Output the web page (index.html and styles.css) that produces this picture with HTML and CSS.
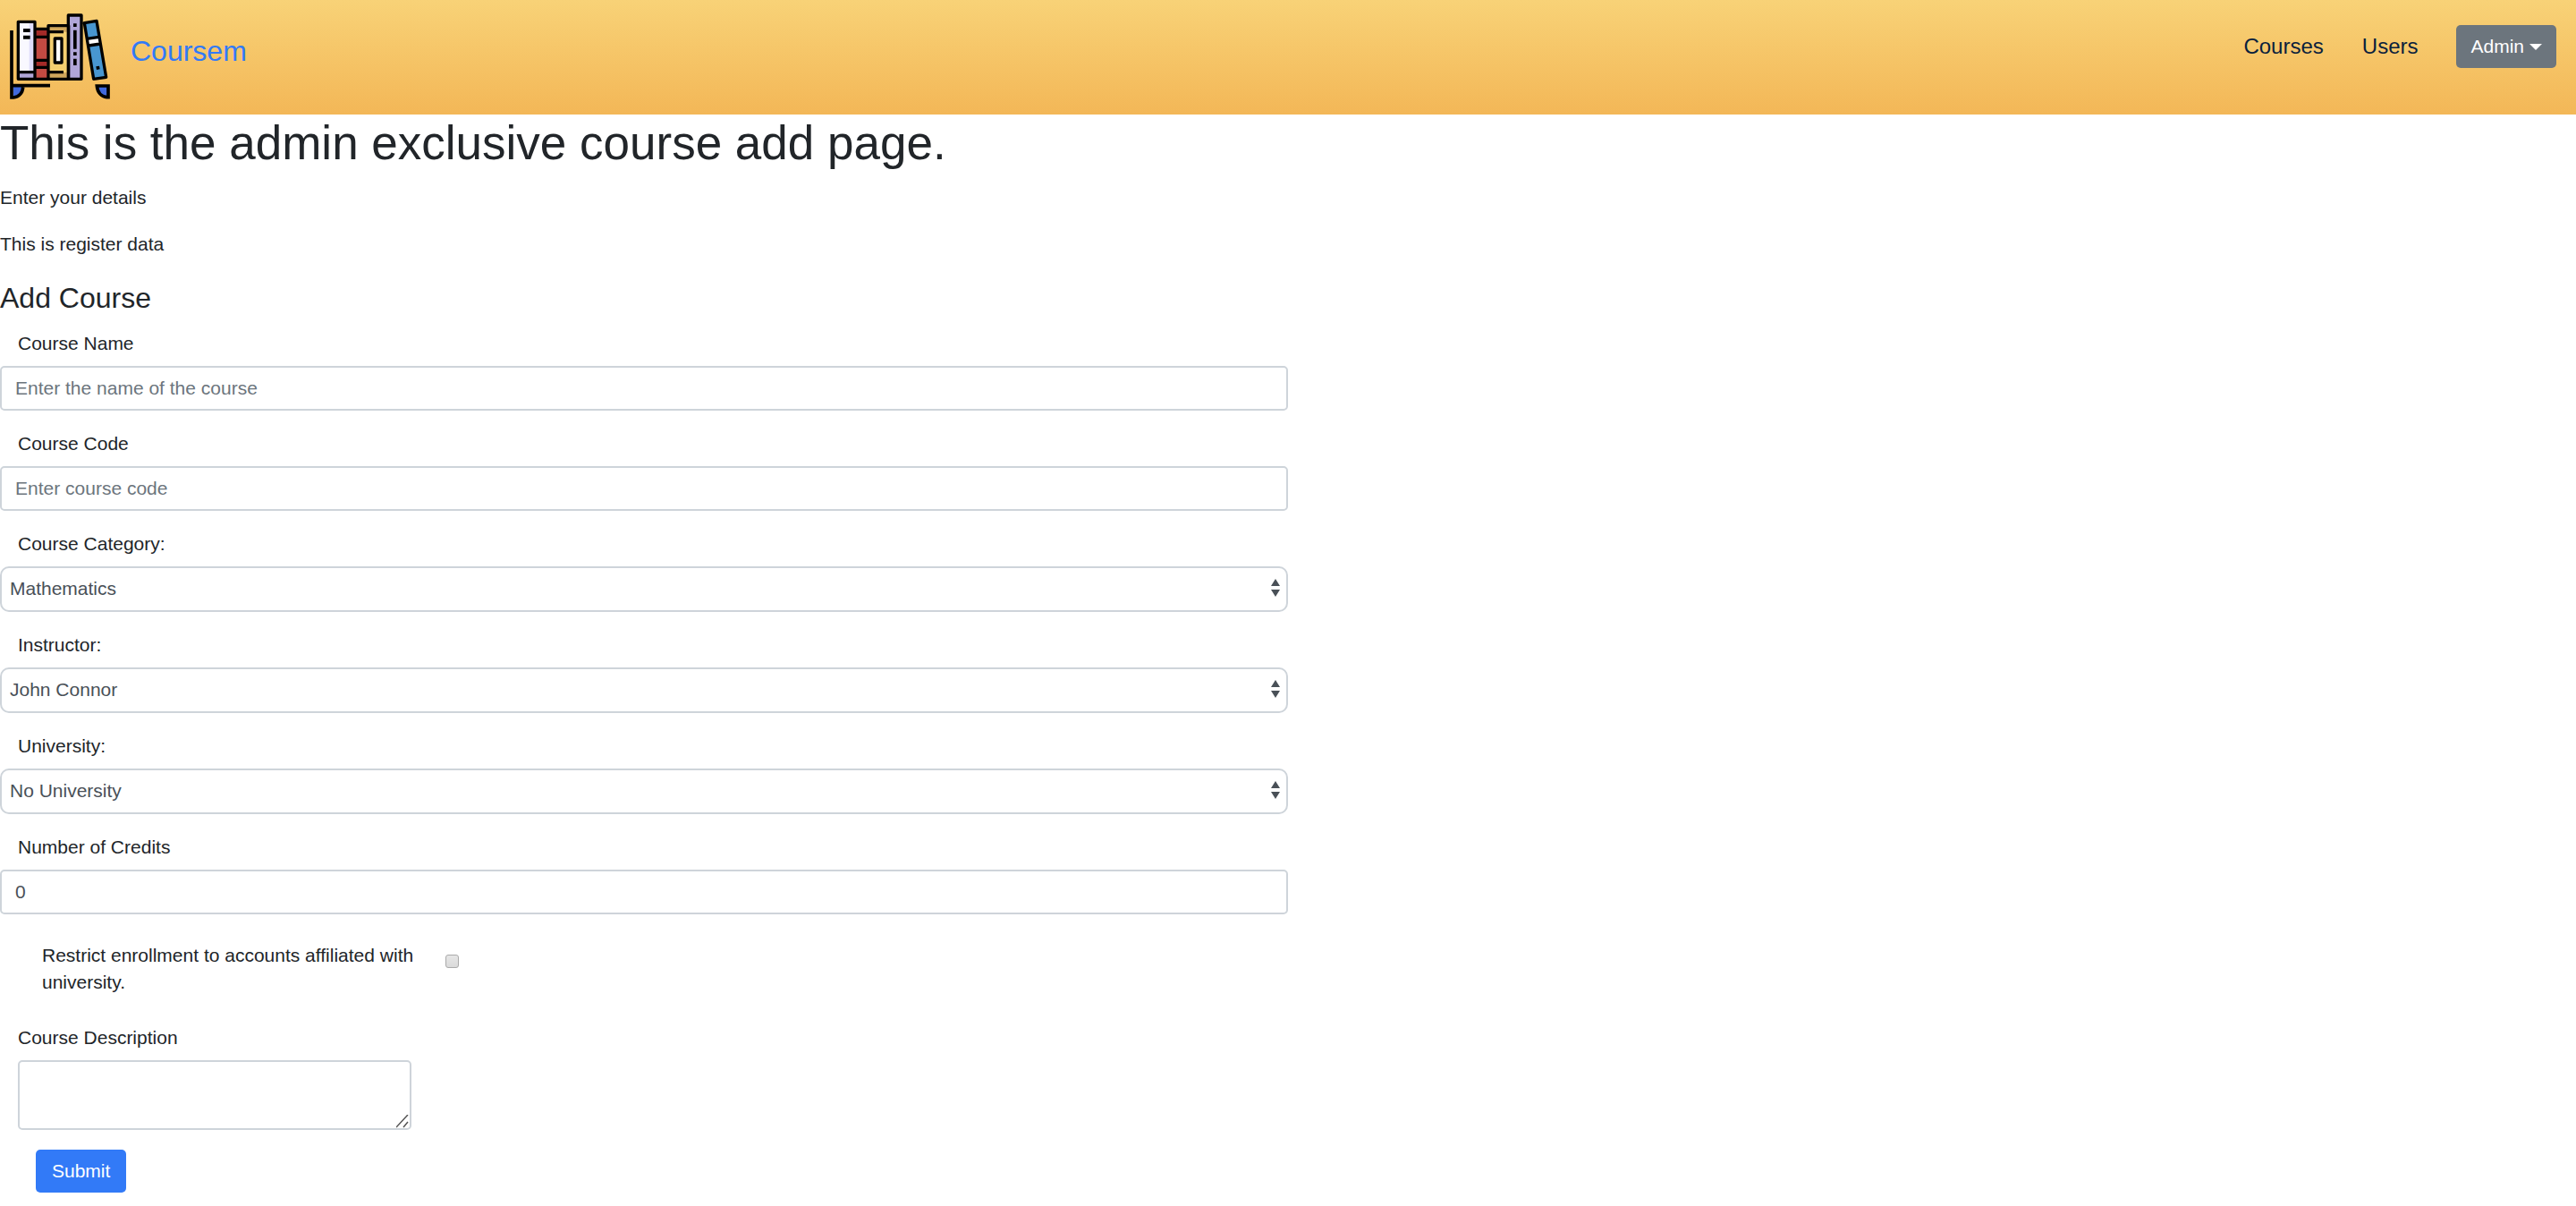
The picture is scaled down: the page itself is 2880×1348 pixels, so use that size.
FILE: index.html
```html
<!DOCTYPE html>
<html lang="en">
<head>
  <meta charset="utf-8">
  <meta name="viewport" content="width=device-width, initial-scale=1">
  <title>Coursem</title>
  <link rel="stylesheet" href="styles.css">
</head>
<body>
  <header class="navbar">
    <a class="brand" href="#">
      <svg class="brand-logo" viewBox="30 42 342 294" aria-hidden="true">
        <!-- shelf and feet -->
        <path d="M45 287H77C77 310 62 326 45 326Z" fill="#4169dc"/>
        <path d="M325 287H363V327C341 326 327 310 325 287Z" fill="#4169dc"/>
        <path d="M39 102V327H45C64 325 76 311 77 293M39 287H168M325 288H363V326H358C340 324 327 310 325 288Z" fill="none" stroke="#000" stroke-width="11"/>
        <!-- white book -->
        <path d="M61 73H117V265H61Z" fill="#f9f8ff"/>
        <path d="M98 78H112V237H98Z" fill="#dfddfb"/>
        <path d="M61 243H117V265H61Z" fill="#b0a6d8"/>
        <!-- red book -->
        <path d="M117 97H162V265H117Z" fill="#c34a42"/>
        <path d="M117 97H162V123H117ZM117 203H162V226H117Z" fill="#a42a28"/>
        <!-- yellow book -->
        <path d="M162 86H230V265H162Z" fill="#f4cf70"/>
        <path d="M168 90H226V107H168ZM168 243H226V260H168ZM213 90H226V107H213Z" fill="#d0a75c"/>
        <path d="M185 130H206V209H185Z" fill="#fff"/>
        <!-- purple book -->
        <path d="M229 51H273V265H229Z" fill="#b0a6d8"/>
        <!-- blue book -->
        <path d="M283 77L324 70L356 259L314 265Z" fill="#4896d0"/>
        <path d="M294 133L330 127L334 146L298 153Z" fill="#fff"/>
        <g fill="none" stroke="#000" stroke-width="10" stroke-linejoin="round">
          <path d="M61 73H117V265H61ZM61 242H117M117 97H162M117 124H162M117 202H162M117 226H162M117 265H162"/>
          <path d="M162 86H230V265H162ZM162 107H213M162 242H213M184 129H207V210H184Z"/>
          <path d="M229 51H273V265H229ZM283 77L324 70L356 259L314 265ZM291 130L332 124M297 153L337 147"/>
        </g>
        <path d="M78 96H101V108H78ZM78 119H101V131H78ZM246 79H257V90H246ZM246 101H257V164H246ZM246 175H257V186H246ZM246 197H257V219H246ZM322 223L333 221L335 232L324 234Z"/>
      </svg>
      <span>Coursem</span>
    </a>
    <nav class="nav-links">
      <a class="nav-link" href="#">Courses</a>
      <a class="nav-link" href="#">Users</a>
      <button class="btn btn-secondary" type="button">Admin<span class="caret"></span></button>
    </nav>
  </header>

  <main>
    <h1>This is the admin exclusive course add page.</h1>
    <p>Enter your details</p>
    <p>This is register data</p>
    <h2>Add Course</h2>

    <form class="course-form">
      <div class="field">
        <label for="name">Course Name</label>
        <input class="control" id="name" type="text" placeholder="Enter the name of the course">
      </div>
      <div class="field">
        <label for="code">Course Code</label>
        <input class="control" id="code" type="text" placeholder="Enter course code">
      </div>
      <div class="field">
        <label for="category">Course Category:</label>
        <select class="control select" id="category"><option>Mathematics</option></select>
      </div>
      <div class="field">
        <label for="instructor">Instructor:</label>
        <select class="control select" id="instructor"><option>John Connor</option></select>
      </div>
      <div class="field">
        <label for="university">University:</label>
        <select class="control select" id="university"><option>No University</option></select>
      </div>
      <div class="field">
        <label for="credits">Number of Credits</label>
        <input class="control" id="credits" type="text" inputmode="numeric" value="0">
      </div>
      <div class="check-row">
        <label for="restrict">Restrict enrollment to accounts affiliated with university.</label>
        <input class="checkbox" id="restrict" type="checkbox">
      </div>
      <div class="field">
        <label for="description">Course Description</label>
        <textarea class="control textarea" id="description"></textarea>
      </div>
      <button class="btn btn-primary" type="submit">Submit</button>
    </form>
  </main>
</body>
</html>
```
FILE: styles.css
```css
*,
*::before,
*::after {
  box-sizing: border-box;
}

body {
  margin: 0;
  background: #fff;
  color: #212529;
  font-family: "Liberation Sans", Arial, sans-serif;
  font-size: 21px;
  line-height: 30px;
}

.navbar {
  display: flex;
  justify-content: space-between;
  align-items: flex-start;
  min-height: 128px;
  padding: 14px 22px 14px 10px;
  background: linear-gradient(#f8d277, #f3b757);
}

.brand {
  display: flex;
  gap: 22px;
  color: #327af7;
  font-size: 32px;
  line-height: 86px;
  text-decoration: none;
}

.brand-logo {
  width: 114px;
  height: 98px;
}

.nav-links {
  display: flex;
  align-items: center;
  gap: 43px;
  padding-top: 14px;
}

.nav-link {
  color: #0a1f3d;
  font-size: 24px;
  text-decoration: none;
}

h1,
h2,
p {
  margin: 0;
  font-weight: 400;
}

h1 {
  margin-bottom: 14px;
  font-size: 53px;
  line-height: 64px;
}

p {
  margin-bottom: 22px;
}

h2 {
  padding-top: 4px;
  margin-bottom: 17px;
  font-size: 32px;
  line-height: 38px;
}

.course-form {
  width: 50%;
}

.field {
  display: flex;
  flex-direction: column;
  gap: 10px;
  margin-bottom: 22px;
}

.field label {
  padding-left: 20px;
}

.control {
  width: 100%;
  height: 50px;
  padding: 0 15px;
  border: 2px solid #ced4da;
  border-radius: 5px;
  background: #fff;
  color: #495057;
  font: inherit;
}

.control::placeholder {
  color: #6c757d;
  opacity: 1;
}

.select {
  height: 51px;
  padding: 0 9px 2px;
  border-radius: 10px;
  appearance: none;
  background: #fff url("data:image/svg+xml,%3Csvg xmlns='http://www.w3.org/2000/svg' width='10' height='20'%3E%3Cpath fill='%23495057' d='M0 8L5 0L10 8ZM0 12H10L5 20Z'/%3E%3C/svg%3E") no-repeat right 7px top 12px;
}

.check-row {
  display: flex;
  align-items: flex-start;
  gap: 17px;
  padding: 9px 0 10px 47px;
  margin-bottom: 22px;
}

.check-row label {
  width: 434px;
}

.checkbox {
  width: 15px;
  height: 15px;
  margin: 14px 0 0;
  border: 1px solid #aaa;
  border-radius: 3px;
  appearance: none;
  background: linear-gradient(#e6e6e6, #dadada);
}

.textarea {
  width: 440px;
  height: 78px;
  margin-left: 20px;
  resize: both;
}

.textarea::-webkit-resizer {
  background: url("data:image/svg+xml,%3Csvg xmlns='http://www.w3.org/2000/svg' width='15' height='15'%3E%3Cpath fill='none' stroke='%23555' stroke-width='1.5' d='M0 14L13 0M8 14L13 8'/%3E%3C/svg%3E") no-repeat right bottom;
}

.btn {
  height: 48px;
  padding: 0 16px;
  border: 0;
  border-radius: 5px;
  color: #fff;
  font: inherit;
}

.btn-secondary {
  display: flex;
  align-items: center;
  gap: 6px;
  background: #6c757d;
}

.caret {
  border: 7px solid transparent;
  border-top-color: #fff;
  border-bottom: 0;
}

.btn-primary {
  padding: 0 18px;
  margin-left: 40px;
  background: #327af7;
}
```
